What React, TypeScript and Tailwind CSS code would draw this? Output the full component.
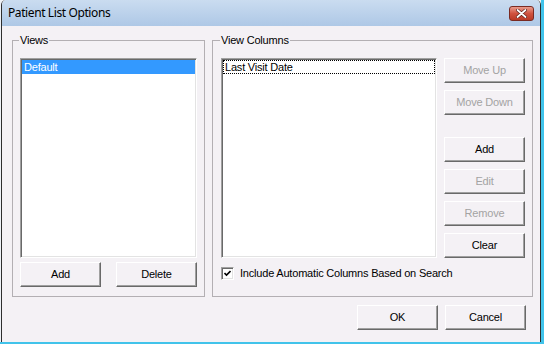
import React from "react";

function Btn({ label, disabled = false }: { label: string; disabled?: boolean }) {
  return (
    <div
      className={`w-[81px] h-[25px] shrink-0 flex items-center justify-center text-[11px] leading-none tracking-[-0.2px] border border-t-white border-l-white border-r-[#696969] border-b-[#696969] shadow-[inset_-1px_-1px_0_#a0a0a0] bg-[#f4f1f5] ${
        disabled ? "text-[#a3a3a3]" : "text-black"
      }`}
    >
      {label}
    </div>
  );
}

const sunken =
  "bg-white border border-t-[#a0a0a0] border-l-[#a0a0a0] border-r-white border-b-white shadow-[inset_1px_1px_0_#696969,inset_-1px_-1px_0_#e3e3e3]";

export default function App() {
  return (
    <div className="w-[544px] h-[344px] bg-[#eef1f6] border-r-[3px] border-b-2 border-[#41c3ea] overflow-hidden font-['Liberation_Sans',Arial,sans-serif]">
      <div className="ml-[1px] h-[342px] border-l border-r border-[#2e2e2e] bg-[#f4f1f5] flex flex-col rounded-tl-[5px] rounded-tr-[5px] overflow-hidden">
        {/* Title bar */}
        <div className="h-[26px] shrink-0 flex items-center justify-between pl-[6px] pr-[6px] bg-gradient-to-b from-[#cadcf0] to-[#aec8e6]">
          <span className="font-['Noto_Sans',sans-serif] text-[12px] tracking-[-0.4px] text-black">Patient List Options</span>
          <div className="w-[25px] h-[15px] rounded-[3px] border border-[#7a2a22] bg-gradient-to-b from-[#e89a8c] via-[#d0533f] to-[#b93a26] flex items-center justify-center">
            <svg width="11" height="9" viewBox="0 0 11 9">
              <path d="M1.5 1 L9.5 8 M9.5 1 L1.5 8" stroke="#5a1d16" strokeWidth="3.2" strokeLinecap="round" />
              <path d="M1.5 1 L9.5 8 M9.5 1 L1.5 8" stroke="#ffffff" strokeWidth="1.8" strokeLinecap="round" />
            </svg>
          </div>
        </div>

        {/* Body */}
        <div className="flex flex-col pl-[10px] pt-[8px] text-[11px] tracking-[-0.2px]">
          <div className="flex gap-[7px]">
            {/* Views */}
            <fieldset className="w-[193px] h-[263px] border border-[#b3afb3] px-[7px] pt-[11px] pb-[9px] flex flex-col gap-[4px]">
              <legend className="ml-[-1px] px-[1px] leading-[13px]">Views</legend>
              <div className={`h-[200px] ${sunken} p-[1px]`}>
                <div className="h-[14px] bg-[#3399ff] text-white leading-[14px] pl-[2px]">Default</div>
              </div>
              <div className="flex justify-between">
                <Btn label="Add" />
                <Btn label="Delete" />
              </div>
            </fieldset>

            {/* View Columns */}
            <fieldset className="w-[321px] h-[263px] border border-[#b3afb3] pl-[8px] pr-[7px] pt-[11px] flex flex-col">
              <legend className="ml-[-1px] px-[1px] leading-[13px]">View Columns</legend>
              <div className="flex gap-[7px]">
                <div className={`w-[216px] h-[200px] ${sunken} p-[1px]`}>
                  <div className="h-[14px] border border-dotted border-black leading-[12px] pl-[1px]">Last Visit Date</div>
                </div>
                <div className="flex flex-col gap-[7px]">
                  <Btn label="Move Up" disabled />
                  <Btn label="Move Down" disabled />
                  <div className="h-[8px]" />
                  <Btn label="Add" />
                  <Btn label="Edit" disabled />
                  <Btn label="Remove" disabled />
                  <Btn label="Clear" />
                </div>
              </div>
              <div className="flex items-center gap-[6px] mt-[9px]">
                <div className={`w-[13px] h-[13px] ${sunken} flex items-center justify-center`}>
                  <svg width="7" height="7" viewBox="0 0 7 7">
                    <path d="M0.5 3 L2.5 5 L6.5 1" stroke="#000" strokeWidth="1.6" fill="none" />
                  </svg>
                </div>
                <span className="leading-none">Include Automatic Columns Based on Search</span>
              </div>
            </fieldset>
          </div>

          <div className="flex justify-end gap-[7px] mt-[8px] pr-[14px]">
            <Btn label="OK" />
            <Btn label="Cancel" />
          </div>
        </div>
      </div>
    </div>
  );
}
